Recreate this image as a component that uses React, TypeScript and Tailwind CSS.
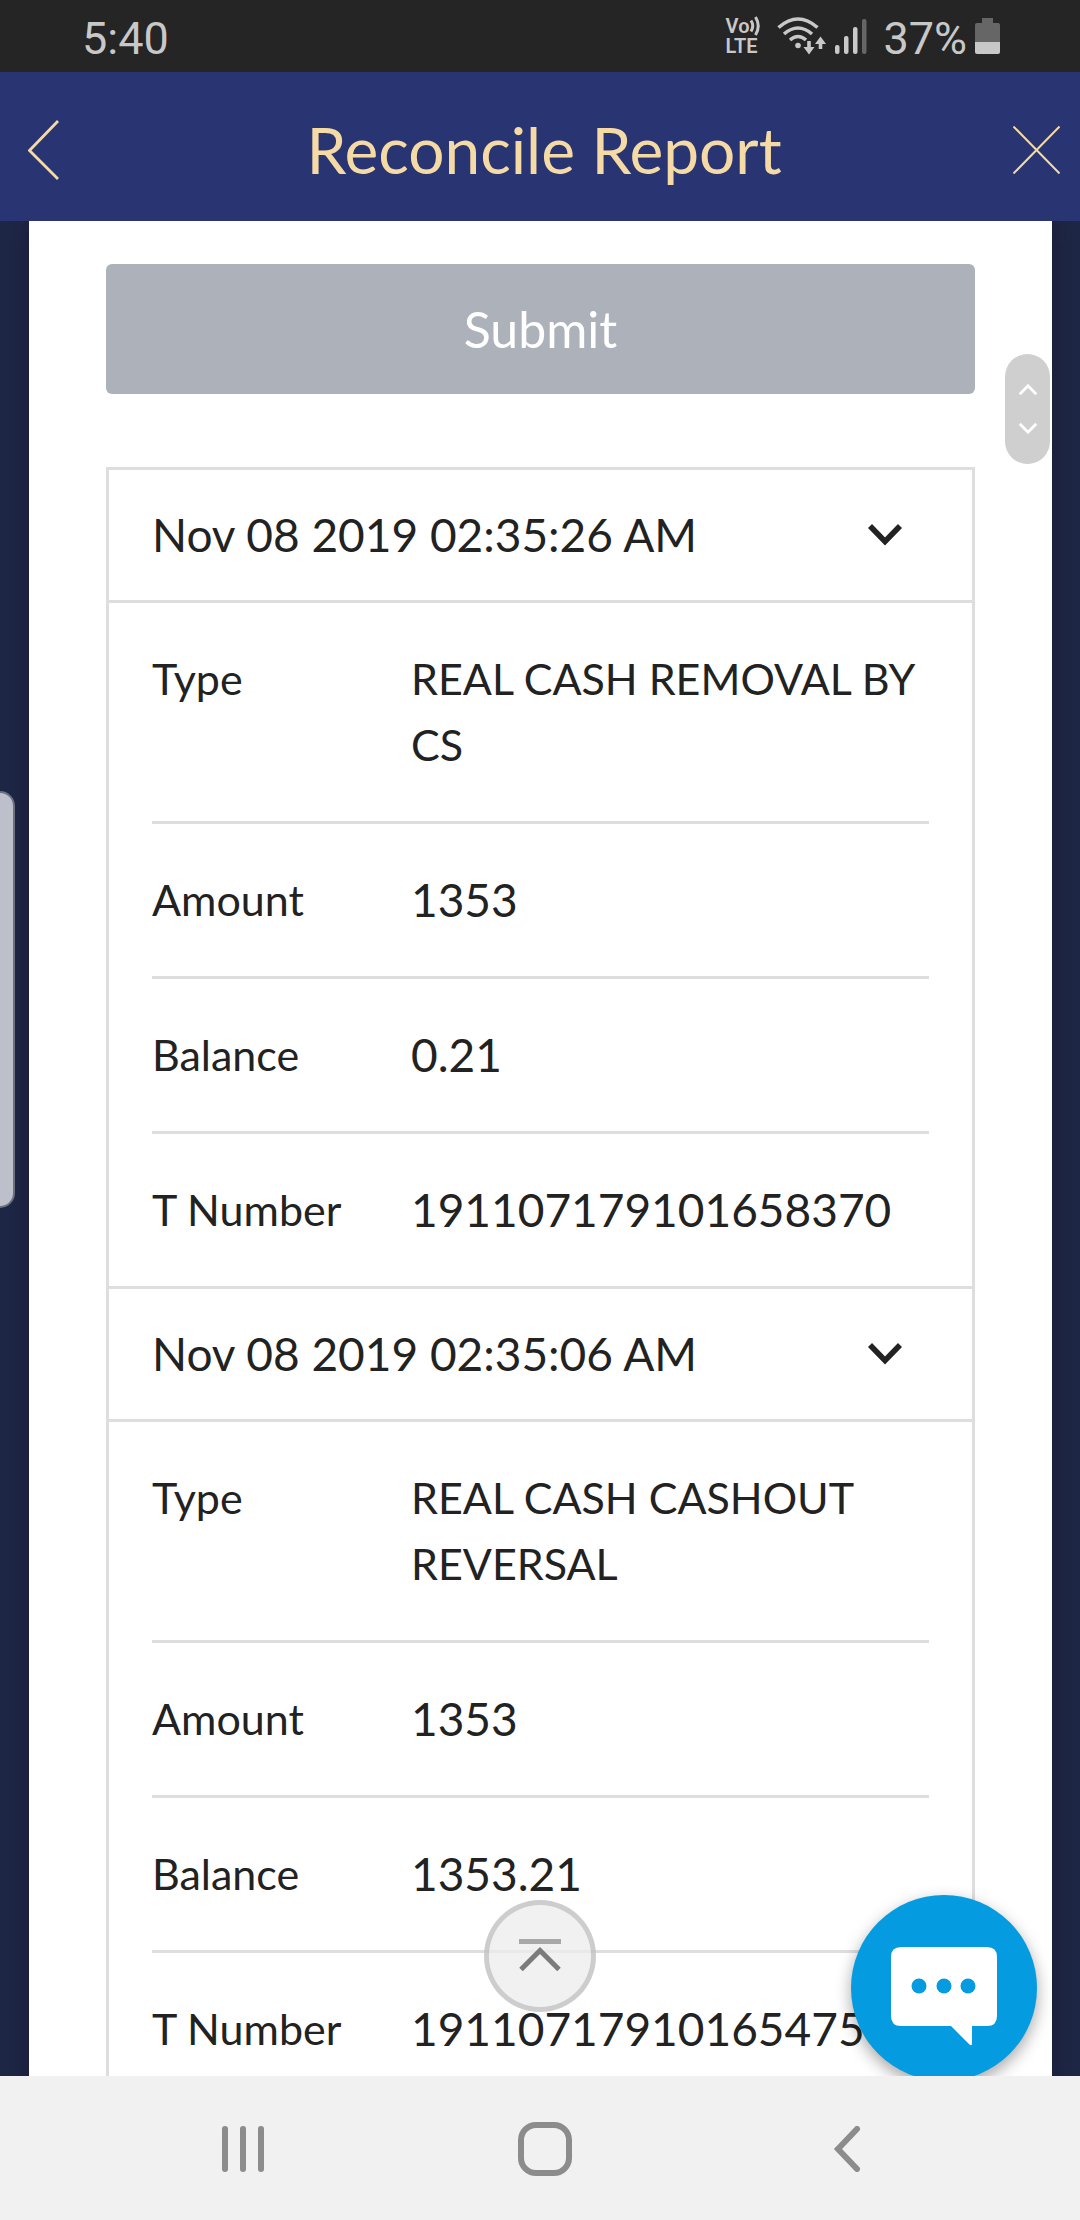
import { useState } from "react"

interface Transaction {
  date: string
  type: string
  amount: string
  balance: string
  tNumber: string
}

const transactions: Transaction[] = [
  {
    date: "Nov 08 2019 02:35:26 AM",
    type: "REAL CASH REMOVAL BY CS",
    amount: "1353",
    balance: "0.21",
    tNumber: "191107179101658370",
  },
  {
    date: "Nov 08 2019 02:35:06 AM",
    type: "REAL CASH CASHOUT REVERSAL",
    amount: "1353",
    balance: "1353.21",
    tNumber: "191107179101654753",
  },
]

function StatusBar() {
  return (
    <div className="flex h-[72px] shrink-0 items-center bg-[#252525] pr-20 pl-[82px] font-[Roboto,sans-serif] text-[45px] leading-none text-[#c8c8c8]">
      <span className="pt-1">5:40</span>
      <div className="ml-auto flex items-center">
        <div className="flex flex-col text-[20px] leading-5 font-semibold">
          <span className="flex items-center">
            Vo
            <svg width="12" height="20" viewBox="0 0 12 20" fill="none" stroke="currentColor" strokeWidth="3">
              <path d="M2 4.500Q5.500 10 2 15.500M6.500 1Q12 10 6.500 19" />
            </svg>
          </span>
          <span>LTE</span>
        </div>
        <svg className="ml-4" width="50" height="38" viewBox="0 0 50 38" fill="none" stroke="currentColor" strokeWidth="3.600">
          <path d="M1.500 10.500Q21 -6.500 40.500 10.500M7 17Q21 5 35 17M13 23Q21 16 29 23" />
          <circle cx="21" cy="28.500" r="2.800" fill="currentColor" stroke="none" />
          <path d="M32 24v8M43.500 32v-7" strokeWidth="3.600" />
          <path d="M26.500 30h11L32 37.500zM38 27h11L43.500 19.500z" fill="currentColor" stroke="none" />
        </svg>
        <svg className="ml-2" width="32" height="36" viewBox="0 0 32 36" fill="currentColor">
          <rect x="0" y="27" width="4.500" height="9" rx="2" />
          <rect x="9" y="18" width="4.500" height="18" rx="2" />
          <rect x="18" y="9" width="4.500" height="27" rx="2" />
          <rect x="27" y="1" width="4.500" height="35" rx="2" fill="#666666" />
        </svg>
        <span className="ml-4 pt-1">37%</span>
        <svg className="ml-2" width="25" height="36" viewBox="0 0 25 36">
          <path d="M7 0h11v5h5q2 0 2 2v17H0V7q0-2 2-2h5z" fill="#666666" />
          <path d="M0 24h25v10q0 2-2 2H2q-2 0-2-2z" fill="currentColor" />
        </svg>
      </div>
    </div>
  )
}

function Header() {
  return (
    <header className="flex h-[149px] shrink-0 items-center justify-between bg-[#293572] pt-1.5 pr-5 pl-7 text-[#f5daa5]">
      <button type="button" aria-label="Back">
        <svg width="47" height="60" viewBox="0 0 47 60" fill="none" stroke="currentColor" strokeWidth="2.800">
          <path d="M30 1L1.500 30.500L30 59" />
        </svg>
      </button>
      <h1 className="text-[64px] leading-none">Reconcile Report</h1>
      <button type="button" aria-label="Close">
        <svg width="47" height="48" viewBox="0 0 47 48" fill="none" stroke="currentColor" strokeWidth="2">
          <path d="M.5 .5l46 47M46.500 .5l-46 47" />
        </svg>
      </button>
    </header>
  )
}

function Row({ label, children }: { label: string; children: React.ReactNode }) {
  return (
    <div className="grid grid-cols-3 border-b-3 border-[#dedede] py-[43px] last:border-b-0">
      <dt className="text-[43px]">{label}</dt>
      <dd className="col-span-2">{children}</dd>
    </div>
  )
}

function TransactionCard({ transaction }: { transaction: Transaction }) {
  const [open, setOpen] = useState(true)

  return (
    <section className="border-b-3 border-[#dedede]">
      <h2>
        <button
          type="button"
          aria-expanded={open}
          onClick={() => setOpen(!open)}
          className="flex w-full items-center justify-between py-8 pr-[70px] pl-[43px]"
        >
          {transaction.date}
          <svg width="34" height="22" viewBox="0 0 34 22" fill="none" stroke="currentColor" strokeWidth="5.600">
            <path d="M2 2l15 15.500L32 2" />
          </svg>
        </button>
      </h2>
      {open && (
        <dl className="border-t-3 border-[#dedede] px-[43px]">
          <Row label="Type">
            <span className="block text-[43px]">{transaction.type}</span>
          </Row>
          <Row label="Amount">{transaction.amount}</Row>
          <Row label="Balance">{transaction.balance}</Row>
          <Row label="T Number">{transaction.tNumber}</Row>
        </dl>
      )}
    </section>
  )
}

function FloatingControls() {
  return (
    <>
      <div className="absolute top-[570px] left-0 h-[417px] w-[15px] rounded-r-[15px] border-2 border-l-0 border-[#6b7080] bg-[#bdbfca]" />
      <button
        type="button"
        aria-label="Scroll"
        className="absolute top-[133px] right-[30px] flex h-[110px] w-[45px] flex-col items-center justify-center gap-7 rounded-full bg-[#cfcfcf]"
      >
        <svg width="18" height="11" viewBox="0 0 18 11" fill="none" stroke="white" strokeWidth="2.800">
          <path d="M.8 10.200L9 1.800l8.200 8.400" />
        </svg>
        <svg width="18" height="11" viewBox="0 0 18 11" fill="none" stroke="white" strokeWidth="2.800">
          <path d="M.8 .8L9 9.200L17.200 .8" />
        </svg>
      </button>
      <button
        type="button"
        aria-label="Back to top"
        className="absolute bottom-16 left-1/2 flex size-28 -translate-x-1/2 items-center justify-center rounded-full border-5 border-black/15 bg-[#ececec]/75"
      >
        <svg width="42" height="34" viewBox="0 0 42 34" fill="none" stroke="#7b7b7b" strokeWidth="5">
          <path d="M0 2.500h42" stroke="#a8a8a8" />
          <path d="M2 30.500L21 11.500l19 19" />
        </svg>
      </button>
      <button
        type="button"
        aria-label="Chat"
        className="absolute right-[43px] -bottom-[5px] flex size-[186px] items-center justify-center rounded-full bg-[#049be0] pt-4 shadow-[0_6px_16px_rgba(0,0,0,0.35)]"
      >
        <svg width="106" height="100" viewBox="0 0 106 100" fill="white">
          <path d="M10 1h86q10 0 10 10v59q0 10-10 10h-15v17q0 4-3 1L60 80H10q-10 0-10-10V11Q0 1 10 1z" />
          <g fill="#049be0">
            <circle cx="28" cy="40" r="7.500" />
            <circle cx="53" cy="40" r="7.500" />
            <circle cx="77" cy="40" r="7.500" />
          </g>
        </svg>
      </button>
    </>
  )
}

function NavigationBar() {
  return (
    <nav className="flex h-36 shrink-0 items-center justify-between bg-[#f1f1f1] pt-0.5 pr-[212px] pl-[222px] text-[#8c8c8c]">
      <button type="button" aria-label="Recent apps">
        <svg width="42" height="46" viewBox="0 0 42 46" fill="currentColor">
          <rect x="0" width="6" height="46" rx="3" />
          <rect x="18" width="6" height="46" rx="3" />
          <rect x="36" width="6" height="46" rx="3" />
        </svg>
      </button>
      <button type="button" aria-label="Home" className="size-[54px] rounded-[18px] border-6 border-current" />
      <button type="button" aria-label="Back">
        <svg
          width="42"
          height="46"
          viewBox="0 0 42 46"
          fill="none"
          stroke="currentColor"
          strokeWidth="6"
          strokeLinecap="round"
        >
          <path d="M31 3L12 23l19 20" />
        </svg>
      </button>
    </nav>
  )
}

export default function App() {
  return (
    <div className="flex h-screen flex-col overflow-hidden bg-[#1e2745] font-[Lato,sans-serif] text-[#222222]">
      <StatusBar />
      <Header />
      <div className="relative min-h-0 flex-1 overflow-hidden">
        <main className="mr-7 ml-[29px] min-h-full bg-white px-[77px] pt-[43px] text-[46px] leading-[66px] shadow-[0_0_20px_#191a38]">
          <button
            type="button"
            className="h-[130px] w-full rounded-md bg-[#adb2ba] text-[50px] text-white"
          >
            Submit
          </button>
          <div className="mt-[73px] border-3 border-b-0 border-[#dedede]">
            {transactions.map((transaction) => (
              <TransactionCard key={transaction.tNumber} transaction={transaction} />
            ))}
          </div>
        </main>
        <FloatingControls />
      </div>
      <NavigationBar />
    </div>
  )
}
